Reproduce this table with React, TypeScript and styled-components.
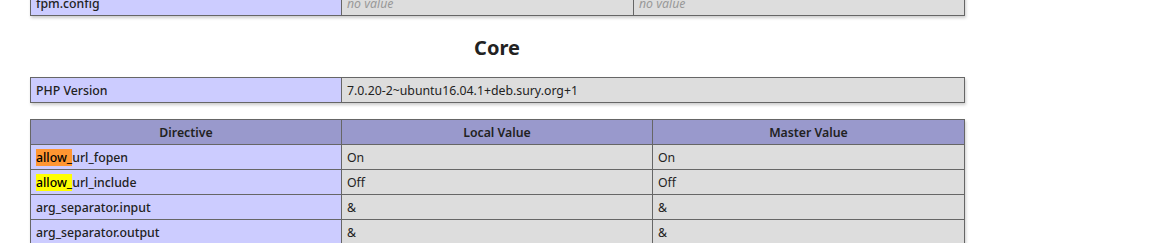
import * as React from "react"
import styled, { createGlobalStyle } from "styled-components"

const GlobalStyle = createGlobalStyle`
  html, body {
    margin: 0;
    padding: 0;
    background: #fff;
    overflow: hidden;
  }
  body {
    font-family: "Noto Sans", "Open Sans", sans-serif;
    color: #222;
  }
`

const directives = [
  { name: "allow_url_fopen", local: "On", master: "On", mark: "active" },
  { name: "allow_url_include", local: "Off", master: "Off", mark: "match" },
  { name: "arg_separator.input", local: "&", master: "&" },
  { name: "arg_separator.output", local: "&", master: "&" },
]

const App = () => {
  return (
    <Page>
      <GlobalStyle />
      <InfoTable>
        <colgroup>
          <Col w={311} />
          <Col w={292} />
          <Col w={331} />
        </colgroup>
        <tbody>
          <tr>
            <KeyCell>fpm.config</KeyCell>
            <ValueCell><NoValue>no value</NoValue></ValueCell>
            <ValueCell><NoValue>no value</NoValue></ValueCell>
          </tr>
        </tbody>
      </InfoTable>

      <Heading>Core</Heading>

      <InfoTable>
        <colgroup>
          <Col w={311} />
          <Col w={623} />
        </colgroup>
        <tbody>
          <tr>
            <KeyCell>PHP Version</KeyCell>
            <ValueCell>7.0.20-2~ubuntu16.04.1+deb.sury.org+1</ValueCell>
          </tr>
        </tbody>
      </InfoTable>

      <InfoTable>
        <colgroup>
          <Col w={311} />
          <Col w={311} />
          <Col w={312} />
        </colgroup>
        <thead>
          <tr>
            <HeadCell>Directive</HeadCell>
            <HeadCell>Local Value</HeadCell>
            <HeadCell>Master Value</HeadCell>
          </tr>
        </thead>
        <tbody>
          {directives.map((d) => (
            <tr key={d.name}>
              <KeyCell>
                {d.mark ? (
                  <>
                    <Found active={d.mark === "active"}>allow_</Found>
                    {d.name.slice(6)}
                  </>
                ) : (
                  d.name
                )}
              </KeyCell>
              <ValueCell>{d.local}</ValueCell>
              <ValueCell>{d.master}</ValueCell>
            </tr>
          ))}
        </tbody>
      </InfoTable>
    </Page>
  )
}

export default App

const Page = styled.div`
  margin-top: -10px;
  padding-left: 30px;
  width: 934px;
`

const InfoTable = styled.table`
  border-collapse: collapse;
  border: 0;
  table-layout: fixed;
  width: 934px;
  box-shadow: 1px 2px 3px #ccc;
  margin: 16px 0;

  &:first-child {
    margin-top: 0;
  }
`

const Col = styled.col<{ w: number }>`
  width: ${(p) => p.w}px;
`

const Cell = styled.td`
  border: 1px solid #666;
  font-size: 12.3px;
  line-height: 16px;
  padding: 5px 5px 3px;
  text-align: left;
  white-space: nowrap;
  overflow: hidden;
`

const KeyCell = styled(Cell)`
  background-color: #ccf;
  font-weight: 500;
`

const ValueCell = styled(Cell)`
  background-color: #ddd;
`

const HeadCell = styled(Cell).attrs({ as: "th" })`
  background-color: #99c;
  font-weight: 600;
  text-align: center;
`

const NoValue = styled.i`
  color: #999;
`

const Found = styled.span<{ active?: boolean }>`
  background: ${(p) => (p.active ? "#ff9632" : "#ffff00")};
  color: #000;
`

const Heading = styled.h2`
  margin: 18px 0 16px;
  font-size: 20px;
  line-height: 27px;
  font-weight: bold;
  text-align: center;
`
